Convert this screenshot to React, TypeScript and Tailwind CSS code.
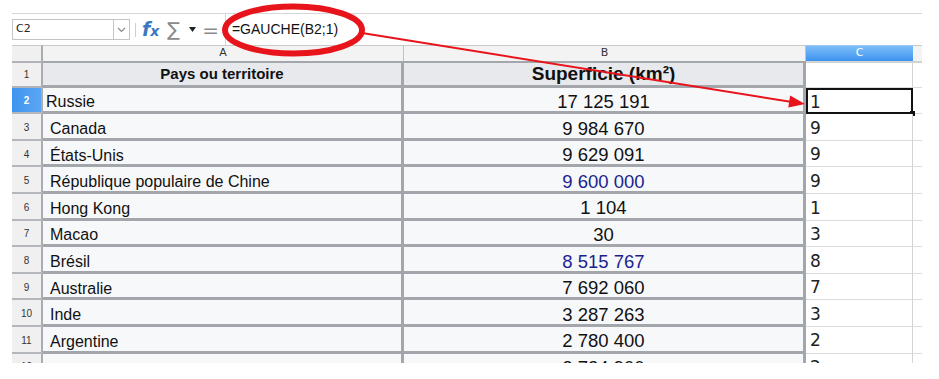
import React from 'react';

type Row = { n: number; name: string; area: string; c: string; blue?: boolean };

const rows: Row[] = [
  { n: 2, name: 'Russie', area: '17 125 191', c: '1' },
  { n: 3, name: 'Canada', area: '9 984 670', c: '9' },
  { n: 4, name: 'États-Unis', area: '9 629 091', c: '9' },
  { n: 5, name: 'République populaire de Chine', area: '9 600 000', c: '9', blue: true },
  { n: 6, name: 'Hong Kong', area: '1 104', c: '1' },
  { n: 7, name: 'Macao', area: '30', c: '3' },
  { n: 8, name: 'Brésil', area: '8 515 767', c: '8', blue: true },
  { n: 9, name: 'Australie', area: '7 692 060', c: '7' },
  { n: 10, name: 'Inde', area: '3 287 263', c: '3' },
  { n: 11, name: 'Argentine', area: '2 780 400', c: '2' },
  { n: 12, name: '', area: '2 724 900', c: '2' },
];

function Toolbar() {
  return (
    <div className="h-[32px] border-t border-[#d6d6d6] flex items-center">
      {/* zone de nom */}
      <div className="w-[118px] h-[21px] border border-[#c4c4c4] bg-white flex items-center">
        <span className="flex-1 pl-[3px] text-[11px] text-[#222] font-['DejaVu_Sans',sans-serif]">C2</span>
        <div className="w-[16px] h-full border-l border-[#c4c4c4] flex items-center justify-center">
          <svg width="9" height="6" viewBox="0 0 9 6" fill="none">
            <path d="M1 1l3.5 3.5L8 1" stroke="#8a8a8a" strokeWidth="1.2" />
          </svg>
        </div>
      </div>
      <div className="ml-[5px] w-px h-[14px] bg-[#cfcfcf]" />
      <span className="ml-[6px] italic font-bold text-[#3b78c0] text-[19px] leading-none font-['DejaVu_Sans',sans-serif]">
        f<span className="text-[14px]">x</span>
      </span>
      <span className="ml-[8px] text-[19px] leading-none text-[#8a8a8a] font-['DejaVu_Sans',sans-serif]">∑</span>
      <svg className="ml-[9px]" width="7" height="5" viewBox="0 0 7 5">
        <path d="M0 0h7L3.5 5z" fill="#222" />
      </svg>
      <span className="ml-[6px] text-[20px] leading-none text-[#8a8a8a] font-['DejaVu_Sans',sans-serif]">=</span>
      {/* ligne de saisie */}
      <div className="ml-[6px] flex-1 h-full border-l border-[#d6d6d6] flex items-center pl-[6px]">
        <span className="text-[14px] text-[#111] font-['Liberation_Sans',Arial,sans-serif]">=GAUCHE(B2;1)</span>
      </div>
    </div>
  );
}

function Grid() {
  const thick = 'border-[#a3a7ac]';
  return (
    <div className="h-[318px] overflow-hidden">
      <div className="grid grid-cols-[31px_361px_402px_107px_9px] grid-rows-[16px_repeat(12,26.6px)] font-['Liberation_Sans',Arial,sans-serif]">
        {/* en-têtes de colonnes */}
        <div className="bg-[#f0f0f0] border-t border-[#c9c9c9] border-r-2 border-r-[#a9acb0]" />
        <div className="bg-[#f3f3f3] border-t border-[#c9c9c9] border-r border-r-[#c2c2c2] flex items-center justify-center text-[11px] text-[#333] font-['DejaVu_Sans',sans-serif]">A</div>
        <div className="bg-[#f3f3f3] border-t border-[#c9c9c9] border-r border-r-[#c2c2c2] flex items-center justify-center text-[11px] text-[#333] font-['DejaVu_Sans',sans-serif]">B</div>
        <div className="bg-gradient-to-b from-[#7dbdf8] to-[#3b93ef] border-t border-[#9cc9f5] flex items-center justify-center text-[11px] text-white font-['DejaVu_Sans',sans-serif]">C</div>
        <div className="bg-[#f3f3f3] border-t border-[#c9c9c9]" />

        {/* ligne 1 */}
        <div className="bg-[#f0f0f0] border-t-2 border-b-2 border-r-2 border-[#b0b3b7] border-r-[#a9acb0] flex items-center justify-center text-[10px] text-[#333]">1</div>
        <div className={`bg-[#e8e9ed] border-t-2 border-b-[3px] border-r-[3px] ${thick} flex items-center justify-center text-[15px] font-bold text-[#111]`}>
          Pays ou territoire
        </div>
        <div className={`bg-[#e8e9ed] border-t-2 border-b-[3px] border-r-[3px] ${thick} flex items-center justify-center text-[19px] font-bold text-[#111]`}>
          Superficie (km²)
        </div>
        <div className="bg-white border-t-2 border-t-[#d2d2d2] border-b border-b-[#dcdcdc] border-r border-r-[#d3d3d3]" />
        <div className="bg-white border-t-2 border-t-[#d2d2d2] border-b border-b-[#dcdcdc]" />

        {rows.map((r) => (
          <React.Fragment key={r.n}>
            <div
              className={`border-b-2 border-r-2 border-[#b4b7bb] border-r-[#a9acb0] flex items-center justify-center pt-[2px] text-[10px] ${
                r.n === 2 ? 'bg-gradient-to-r from-[#3f94ee] to-[#5aa6f4] text-white font-bold' : 'bg-[#f0f0f0] text-[#333]'
              }`}
            >
              {r.n}
            </div>
            <div
              className={`bg-[#f7f8fa] border-b-[3px] border-r-[3px] ${thick} flex items-center pt-[6px] text-[16px] text-[#111] ${
                r.n === 2 ? 'pl-[3px]' : 'pl-[7px]'
              }`}
            >
              {r.name}
            </div>
            <div
              className={`bg-[#f7f8fa] border-b-[3px] border-r-[3px] ${thick} flex items-center justify-center pt-[5px] text-[18.5px] ${
                r.blue ? 'text-[#1c1f8f]' : 'text-[#111]'
              }`}
            >
              {r.area}
            </div>
            <div
              className={`relative bg-white flex items-center pt-[3px] text-[17px] text-[#222] font-['DejaVu_Sans',sans-serif] ${
                r.n === 2 ? 'pl-[2px] border-2 border-[#111]' : 'pl-[4px] border-b border-b-[#dcdcdc] border-r border-r-[#d3d3d3]'
              }`}
            >
              {r.c}
              {r.n === 2 && <span className="absolute -right-[4px] -bottom-[4px] w-[5px] h-[5px] bg-[#111]" />}
            </div>
            <div className="bg-white border-b border-b-[#dcdcdc]" />
          </React.Fragment>
        ))}
      </div>
    </div>
  );
}

export default function App() {
  return (
    <div className="relative w-[939px] h-[379px] bg-white overflow-hidden">
      <div className="pl-[12px] pt-[13px] w-[922px]">
        <Toolbar />
        <Grid />
      </div>
      {/* annotation rouge */}
      <svg className="absolute inset-0 pointer-events-none" width="939" height="379" viewBox="0 0 939 379">
        <ellipse cx="293.5" cy="30" rx="68.5" ry="23.5" fill="none" stroke="#e8141b" strokeWidth="6" />
        <line x1="362" y1="33" x2="792" y2="102" stroke="#e8141b" strokeWidth="2" />
        <polygon points="805,104 788.3,107.4 790.1,95.6" fill="#e8141b" />
      </svg>
    </div>
  );
}
